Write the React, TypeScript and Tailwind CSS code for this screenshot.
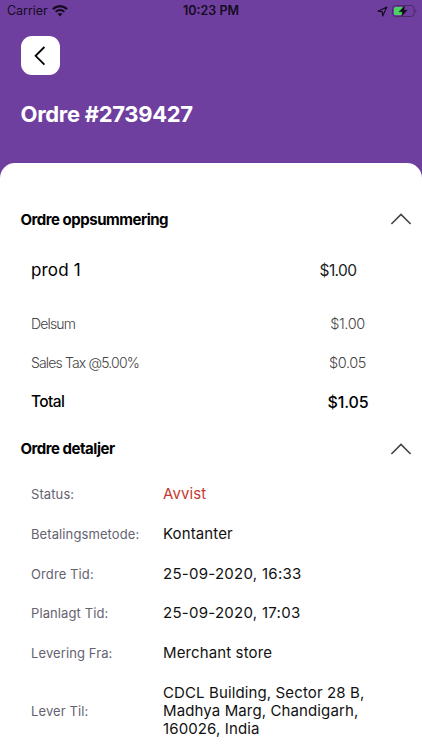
import clsx from "clsx";

const charges = [
    { label: "Delsum", amount: "$1.00" },
    { label: "Sales Tax @5.00%", amount: "$0.05" },
];

const details = [
    { label: "Status:", value: "Avvist", rejected: true },
    { label: "Betalingsmetode:", value: "Kontanter" },
    { label: "Ordre Tid:", value: "25-09-2020, 16:33", wide: true },
    { label: "Planlagt Tid:", value: "25-09-2020, 17:03", wide: true },
    { label: "Levering Fra:", value: "Merchant store" },
    { label: "Lever Til:", value: "CDCL Building, Sector 28 B, Madhya Marg, Chandigarh, 160026, India" },
];

function WifiIcon() {
    return (
        <svg width="16" height="12" viewBox="0 0 16 12" fill="none" stroke="#140b1f">
            <path d="M.9 4.1a10 10 0 0 1 14.2 0" strokeWidth="2.3" />
            <path d="M3.6 6.9a6.2 6.2 0 0 1 8.8 0" strokeWidth="2" />
            <path d="M8 11.4 5.7 9.1a3.2 3.2 0 0 1 4.6 0z" fill="#140b1f" stroke="none" />
        </svg>
    );
}

function LocationIcon() {
    return (
        <svg width="11" height="11" viewBox="0 0 11 11" fill="none" stroke="#140b1f" strokeWidth="1.2" strokeLinejoin="round">
            <path d="M9.8 1 1 5.2l4.2.5.5 4.3z" />
        </svg>
    );
}

function BatteryIcon() {
    return (
        <svg width="25" height="12" viewBox="0 0 25 12" fill="none">
            <rect x="0.5" y="0.5" width="21.5" height="11" rx="3" stroke="#4a2a6a" />
            <rect x="2" y="2" width="9" height="8" rx="1.5" fill="#4cd263" />
            <path d="M23.4 4.2v3.6c.7-.3 1.1-1 1.1-1.8s-.4-1.5-1.1-1.8z" fill="#4a2a6a" />
            <path d="M12.6 1 7 6.8h3.4L9.8 11l5.4-5.8h-3.3z" fill="#140b1f" stroke="#140b1f" strokeWidth="0.4" />
        </svg>
    );
}

function StatusBar() {
    return (
        <div className="grid h-[22px] grid-cols-[1fr_auto_1fr] items-center pl-[7px] pr-[5px] text-[#140b1f]">
            <div className="flex items-center gap-1">
                <span className="text-[12.5px] leading-[22px] tracking-[-0.05px]">Carrier</span>
                <WifiIcon />
            </div>
            <span className="pr-[2px] text-[12.5px] font-semibold leading-[22px]">10:23 PM</span>
            <div className="flex items-center justify-end gap-1">
                <LocationIcon />
                <BatteryIcon />
            </div>
        </div>
    );
}

function SectionHeading({ title, className }: { title: string; className?: string }) {
    return (
        <div className="flex h-10 items-center justify-between pl-[20.5px] pr-[10px]">
            <h2 className={clsx("text-[15px] font-bold tracking-[-0.48px] text-black", className)}>{title}</h2>
            <svg width="22" height="12" viewBox="0 0 22 12" fill="none" stroke="#444" strokeWidth="1.6">
                <path d="M1.4 11 11 1.4l9.6 9.6" />
            </svg>
        </div>
    );
}

export default function App() {
    return (
        <div className="h-[750px] w-full overflow-hidden bg-[#6f3fa0] font-['Inter',sans-serif]">
            <header className="h-[163px]">
                <StatusBar />
                <div className="px-[20.5px] pt-[14px]">
                    <button className="flex size-[39px] items-center justify-center rounded-[11px] bg-white pr-px">
                        <svg width="12" height="20" viewBox="0 0 12 20" fill="none" stroke="#000" strokeWidth="1.8">
                            <path d="M10.4 1 1.6 9.8l8.8 8.8" />
                        </svg>
                    </button>
                    <h1 className="mt-6 text-[22px] font-bold leading-[30px] tracking-[-0.3px] text-white">Ordre #2739427</h1>
                </div>
            </header>

            <main className="h-[587px] rounded-t-[15px] bg-white pt-9">
                <SectionHeading title="Ordre oppsummering" className="pt-[2px]" />
                <div className="flex h-16 items-center justify-between pl-[31px] pr-[54px]">
                    <span className="text-[17px] tracking-[0.15px] text-black">prod 1</span>
                    <span className="w-[60px] text-center text-[15.5px] tracking-[-0.6px] text-[#222]">$1.00</span>
                </div>

                <div className="pt-px">
                    {charges.map((charge) => (
                        <div key={charge.label} className="flex h-[39px] items-center justify-between pl-[31px] pr-[44.5px] font-light text-[#444]">
                            <span className="text-[14px] leading-5 tracking-[-0.85px]">{charge.label}</span>
                            <span className="w-[60px] text-center text-[14.5px] leading-5 tracking-[-0.4px]">{charge.amount}</span>
                        </div>
                    ))}
                    <div className="flex h-10 items-center justify-between pl-[31px] pr-[44px] font-medium text-black">
                        <span className="text-[15.5px] leading-6 tracking-[-0.6px]">Total</span>
                        <span className="w-[60px] text-center text-[16px] leading-6 tracking-[-0.1px]">$1.05</span>
                    </div>
                </div>

                <div className="pt-[7px]">
                    <SectionHeading title="Ordre detaljer" />
                    <dl className="pt-[5.5px]">
                        {details.map((item) => (
                            <div key={item.label} className="grid grid-cols-[132px_220px] items-center py-[10.7px] pl-[31px] leading-[18.3px]">
                                <dt className="text-[13px] tracking-[0.1px] text-[#656370]">{item.label}</dt>
                                <dd
                                    className={clsx(
                                        "text-[15px]",
                                        item.wide ? "tracking-[0.27px]" : "tracking-[0.12px]",
                                        item.rejected ? "text-[#c43a34]" : "text-[#111]"
                                    )}
                                >
                                    {item.value}
                                </dd>
                            </div>
                        ))}
                    </dl>
                </div>
            </main>
        </div>
    );
}
